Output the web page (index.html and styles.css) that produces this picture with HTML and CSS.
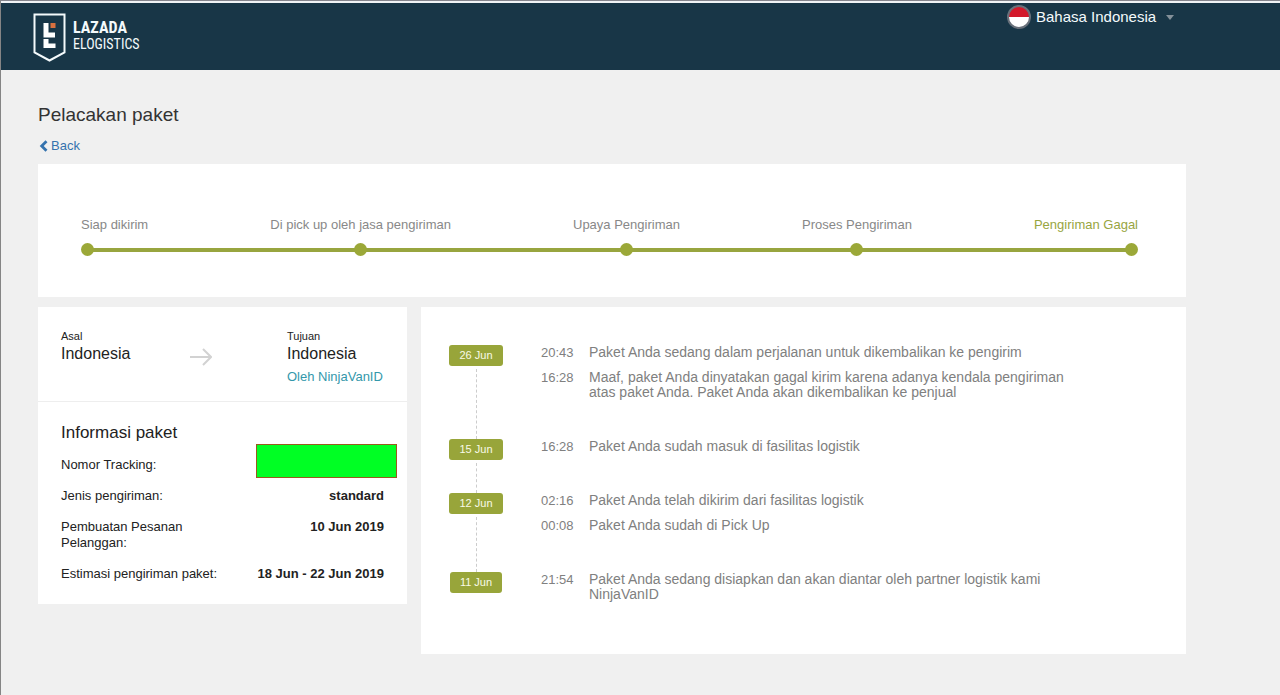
FILE: index.html
```html
<!DOCTYPE html>
<html lang="id">
<head>
<meta charset="utf-8">
<meta name="viewport" content="width=device-width, initial-scale=1">
<title>Pelacakan paket</title>
<link rel="stylesheet" href="styles.css">
</head>
<body>
<header class="topbar">
  <div class="brand">
    <svg class="brand-mark" width="33" height="49" viewBox="0 0 33 49" aria-hidden="true">
      <path d="M1.500 1.500H31.500V39.500L16.500 47.500L1.500 39.500Z" fill="none" stroke="#f4fafc" stroke-width="2"/>
      <path d="M10.500 10H15.500V19.500H22V24.500H10.500Z" fill="#fff"/>
      <path d="M10.500 26H15.500V30.500H22.500V35H10.500Z" fill="#fff"/>
      <path d="M17.500 10H22.500V15H17.500Z" fill="#d9703f"/>
    </svg>
    <div class="brand-name"><strong class="brand-main">LAZADA</strong><span class="brand-sub">ELOGISTICS</span></div>
  </div>
  <div class="language">
    <svg width="24" height="24" viewBox="0 0 24 24" aria-hidden="true">
      <circle cx="12" cy="12" r="11" fill="#fff"/>
      <path d="M1 12A11 11 0 0 1 23 12Z" fill="#d3192b"/>
      <circle cx="12" cy="12" r="11" fill="none" stroke="#68707a" stroke-width="2"/>
    </svg>
    <select class="language-select" aria-label="Bahasa">
      <option>Bahasa Indonesia</option>
    </select>
    <svg width="8" height="5" viewBox="0 0 8 5" aria-hidden="true"><path d="M0 0H8L4 5Z" fill="#84919a"/></svg>
  </div>
</header>

<main class="page">
  <h1 class="title">Pelacakan paket</h1>
  <a class="back" href="#"><svg width="9" height="12" viewBox="0 0 9 12" aria-hidden="true"><path d="M7.500 1.200L2.700 6L7.500 10.800" fill="none" stroke="#3573ae" stroke-width="2.800"/></svg>Back</a>

  <section class="card progress">
    <ol class="steps">
      <li class="step">Siap dikirim</li>
      <li class="step">Di pick up oleh jasa pengiriman</li>
      <li class="step">Upaya Pengiriman</li>
      <li class="step">Proses Pengiriman</li>
      <li class="step current">Pengiriman Gagal</li>
    </ol>
  </section>

  <div class="columns">
    <section class="card">
      <div class="route">
        <div>
          <div class="place-label">Asal</div>
          <div class="place">Indonesia</div>
        </div>
        <svg class="arrow" width="22" height="18" viewBox="0 0 22 18" aria-hidden="true"><path d="M0 9H21M13 1L21 9L13 17" fill="none" stroke="#d2d2d2" stroke-width="2"/></svg>
        <div>
          <div class="place-label">Tujuan</div>
          <div class="place">Indonesia</div>
          <a class="carrier" href="#">Oleh NinjaVanID</a>
        </div>
      </div>
      <div class="info">
        <h2 class="info-title">Informasi paket</h2>
        <dl class="facts">
          <div class="fact"><dt>Nomor Tracking:</dt><dd><span class="redacted"></span></dd></div>
          <div class="fact"><dt>Jenis pengiriman:</dt><dd>standard</dd></div>
          <div class="fact"><dt>Pembuatan Pesanan Pelanggan:</dt><dd>10 Jun 2019</dd></div>
          <div class="fact"><dt>Estimasi pengiriman paket:</dt><dd>18 Jun - 22 Jun 2019</dd></div>
        </dl>
      </div>
    </section>

    <section class="card">
      <ol class="timeline">
        <li class="day">
          <div class="rail"><span class="badge">26 Jun</span></div>
          <ul class="events">
            <li class="event"><time>20:43</time><p>Paket Anda sedang dalam perjalanan untuk dikembalikan ke pengirim</p></li>
            <li class="event"><time>16:28</time><p>Maaf, paket Anda dinyatakan gagal kirim karena adanya kendala pengiriman atas paket Anda. Paket Anda akan dikembalikan ke penjual</p></li>
          </ul>
        </li>
        <li class="day">
          <div class="rail"><span class="badge">15 Jun</span></div>
          <ul class="events">
            <li class="event"><time>16:28</time><p>Paket Anda sudah masuk di fasilitas logistik</p></li>
          </ul>
        </li>
        <li class="day">
          <div class="rail"><span class="badge">12 Jun</span></div>
          <ul class="events">
            <li class="event"><time>02:16</time><p>Paket Anda telah dikirim dari fasilitas logistik</p></li>
            <li class="event"><time>00:08</time><p>Paket Anda sudah di Pick Up</p></li>
          </ul>
        </li>
        <li class="day">
          <div class="rail"><span class="badge">11 Jun</span></div>
          <ul class="events">
            <li class="event"><time>21:54</time><p>Paket Anda sedang disiapkan dan akan diantar oleh partner logistik kami NinjaVanID</p></li>
          </ul>
        </li>
      </ol>
    </section>
  </div>
</main>
</body>
</html>
```
FILE: styles.css
```css
* { box-sizing: border-box; }

body {
  margin: 0;
  min-height: 100vh;
  background: #f0f0f0;
  border-top: 1px solid #85858d;
  border-left: 1px solid #858585;
  color: #222;
  font-family: "Liberation Sans", Arial, sans-serif;
  font-size: 13px;
  line-height: 16px;
}

h1, h2, p, ol, ul, dl, dd { margin: 0; padding: 0; font-weight: normal; }
ol, ul { list-style: none; }
a { text-decoration: none; }
svg { display: block; flex: none; }

.topbar {
  display: flex;
  justify-content: space-between;
  align-items: flex-start;
  border-top: 2px solid #f0f3f6;
  background: #183647;
  padding: 10px 106px 8px 32px;
}
.brand { display: flex; align-items: center; gap: 7px; }
.brand-name {
  display: flex;
  flex-direction: column;
  color: #f4fafc;
  font-family: "Liberation Sans Narrow", "Roboto Condensed", "Liberation Sans", sans-serif;
  line-height: 16px;
  padding-bottom: 4px;
}
.brand-main { font-size: 16px; }
.brand-sub { font-size: 14px; }
.language { display: flex; align-items: center; gap: 5px; margin-top: -8px; }
.language-select {
  appearance: none;
  border: 0;
  margin: 0 4px 0 0;
  padding: 0;
  background: none;
  color: #f4fafc;
  font: 15px/20px "Liberation Sans", Arial, sans-serif;
}

.page { padding: 34px 94px 40px 37px; }
.title { color: #333; font-size: 19px; line-height: 22px; }
.back { display: flex; align-items: center; gap: 3px; margin: 12px 0 10px; color: #3573ae; width: max-content; }
.back svg { margin-left: 1px; }
.card { background: #fff; }

.progress { padding: 53px 48px 41px 43px; margin-bottom: 10px; }
.steps {
  display: flex;
  justify-content: space-between;
  background: linear-gradient(#98a53f, #98a53f) center bottom 4px / calc(100% - 14px) 4px no-repeat;
}
.step { display: flex; flex-direction: column; align-items: center; gap: 10px; color: #888; }
.step::after { content: ""; width: 13px; height: 13px; border-radius: 50%; background: #9ba838; }
.step:first-child { align-items: flex-start; }
.step:last-child { align-items: flex-end; }
.step.current { color: #98a53f; }

.columns { display: grid; grid-template-columns: 369fr 765fr; gap: 14px; align-items: start; }

.route {
  display: grid;
  grid-template-columns: 129fr 97fr 97fr;
  padding: 21px 23px 16px;
  border-bottom: 1px solid #eee;
}
.place-label { font-size: 11px; }
.place { font-size: 16px; line-height: 20px; }
.carrier { display: block; color: #3498ab; margin-top: 5px; }
.arrow { margin-top: 20px; }

.info { padding: 20px 23px 22px; }
.info-title { font-size: 17px; line-height: 22px; margin-bottom: 13px; }
.facts { display: grid; gap: 15px; }
.fact { display: flex; justify-content: space-between; position: relative; }
.fact dt { max-width: 160px; }
.fact dd { font-weight: bold; }
.redacted {
  position: absolute;
  top: -13px;
  right: -13px;
  width: 141px;
  height: 34px;
  background: #00ff24;
  border: 1px solid #9a5a1e;
}

.timeline { padding: 38px 28px 13px; color: #808080; }
.day { display: flex; gap: 38px; }
.rail { display: flex; flex-direction: column; align-items: center; width: 54px; flex: none; }
.badge {
  border-radius: 3px;
  background: #98a53a;
  color: #f8fae8;
  font-size: 11px;
  line-height: 21px;
  padding: 0 10px;
}
.day:not(:last-child) .rail::after { content: ""; flex: 1; margin-top: 3px; border-left: 1px dashed #ccc; }
.events { padding-bottom: 29px; }
.event { display: flex; gap: 16px; padding-bottom: 10px; line-height: 15px; }
.event time { width: 32px; flex: none; }
.event p { max-width: 490px; font-size: 14px; }
```
